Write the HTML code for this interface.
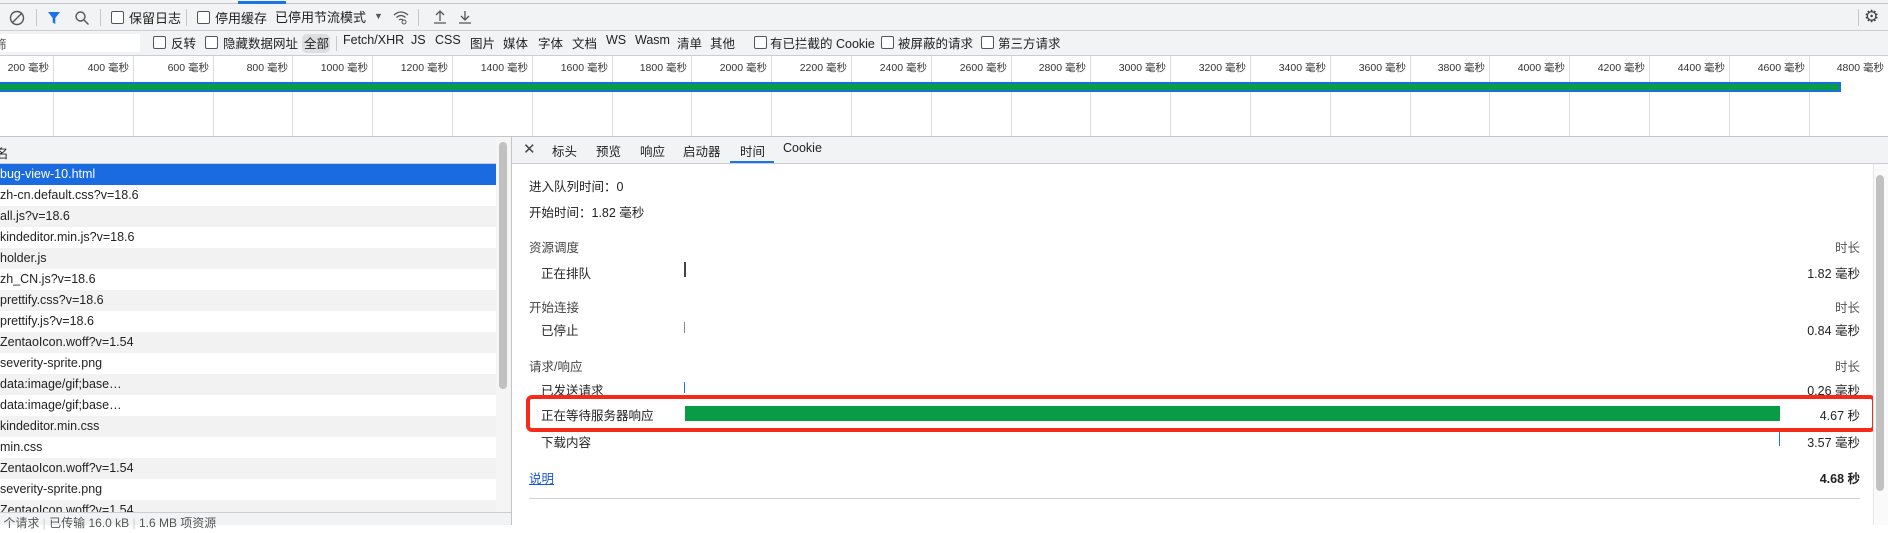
<!DOCTYPE html>
<html><head><meta charset="utf-8"><style>
*{margin:0;padding:0;box-sizing:border-box}
body{width:1888px;height:525px;overflow:hidden;background:#fff;font-family:"Liberation Sans","Noto Sans CJK SC",sans-serif;font-size:12px;color:#222;position:relative}
.a{position:absolute;white-space:nowrap}
.cb{position:absolute;width:13px;height:13px;border:1px solid #555;border-radius:2px;background:#fff}
.dv{position:absolute;width:1px;background:#c8c8c8}
.row{position:absolute;left:0;width:496px;height:21px;line-height:21px;padding-left:0;font-size:12.5px}
.tk{position:absolute;top:56px;height:80px;width:1px;background:#dcdcdc}
.tl{position:absolute;top:60px;font-size:10.5px;color:#333;text-align:right;width:70px}
.d{position:absolute;font-size:12.5px;white-space:nowrap}
.r{position:absolute;right:28px;font-size:12.5px;text-align:right}
.f{position:absolute;top:33px;font-size:12.5px;white-space:nowrap}
</style></head><body>
<div class="a" style="left:0;top:0;width:1888px;height:4px;background:#f1f3f4;border-bottom:1px solid #c4c4c4"></div>
<div class="a" style="left:238px;top:1px;width:48px;height:3px;background:#1a73e8"></div>
<div class="a" style="left:0;top:4px;width:1888px;height:27px;background:#f1f3f4;border-bottom:1px solid #cbcdd1"></div>
<svg class="a" style="left:9px;top:10px" width="16" height="16" viewBox="0 0 16 16"><circle cx="8" cy="8" r="6.5" fill="none" stroke="#555" stroke-width="1.4"/><line x1="3.5" y1="12.5" x2="12.5" y2="3.5" stroke="#555" stroke-width="1.4"/></svg>
<div class="dv" style="left:36px;top:9px;height:17px"></div>
<svg class="a" style="left:47px;top:11px" width="14" height="14" viewBox="0 0 14 14"><path d="M1 1H13L8.3 7V13L5.7 11.5V7Z" fill="#1a73e8"/></svg>
<svg class="a" style="left:74px;top:10px" width="16" height="16" viewBox="0 0 16 16"><circle cx="6.5" cy="6.5" r="4.5" fill="none" stroke="#555" stroke-width="1.4"/><line x1="10" y1="10" x2="14.5" y2="14.5" stroke="#555" stroke-width="1.4"/></svg>
<div class="dv" style="left:100px;top:9px;height:17px"></div>
<div class="cb" style="left:111px;top:11px"></div><div class="a" style="left:129px;top:8px;font-size:13px">保留日志</div>
<div class="dv" style="left:186px;top:9px;height:17px"></div>
<div class="cb" style="left:197px;top:11px"></div><div class="a" style="left:215px;top:8px;font-size:13px">停用缓存</div>
<div class="a" style="left:275px;top:7px;font-size:13px">已停用节流模式</div>
<div class="a" style="left:374px;top:11px;font-size:9px;color:#555">▼</div>
<svg class="a" style="left:392px;top:9px" width="18" height="16" viewBox="0 0 18 16"><path d="M2 6Q9 0 16 6M4.5 8.5Q9 4.5 13.5 8.5M7 11Q9 9.5 11 11" fill="none" stroke="#555" stroke-width="1.3"/><circle cx="12" cy="13" r="2" fill="none" stroke="#555" stroke-width="1"/></svg>
<div class="dv" style="left:418px;top:9px;height:17px"></div>
<svg class="a" style="left:433px;top:9px" width="14" height="16" viewBox="0 0 14 16"><path d="M7 12V2M3 6L7 2L11 6M1 14H13" fill="none" stroke="#555" stroke-width="1.3"/></svg>
<svg class="a" style="left:458px;top:9px" width="14" height="16" viewBox="0 0 14 16"><path d="M7 2V11M3 7L7 11L11 7M1 14H13" fill="none" stroke="#555" stroke-width="1.3"/></svg>
<div class="dv" style="left:1858px;top:9px;height:17px"></div>
<div class="a" style="left:1864px;top:7px;font-size:17px;color:#444">⚙</div>
<div class="a" style="left:0;top:31px;width:1888px;height:25px;background:#f1f3f4;border-bottom:1px solid #cbcdd1"></div>
<div class="a" style="left:0;top:34px;width:140px;height:18px;background:#fff"></div>
<div class="a" style="left:-6px;top:34px;font-size:12.5px;color:#555">筛</div>
<div class="cb" style="left:153px;top:36px"></div><div class="f" style="left:171px">反转</div>
<div class="cb" style="left:205px;top:36px"></div><div class="f" style="left:223px">隐藏数据网址</div>
<div class="a" style="left:302px;top:34px;width:28px;height:19px;background:#dcdee2;border-radius:5px"></div>
<div class="f" style="left:304px">全部</div>
<div class="dv" style="left:336px;top:36px;height:15px"></div>
<div class="f" style="left:343px">Fetch/XHR</div>
<div class="f" style="left:411px">JS</div>
<div class="f" style="left:435px">CSS</div>
<div class="f" style="left:470px">图片</div>
<div class="f" style="left:503px">媒体</div>
<div class="f" style="left:538px">字体</div>
<div class="f" style="left:572px">文档</div>
<div class="f" style="left:606px">WS</div>
<div class="f" style="left:635px">Wasm</div>
<div class="f" style="left:677px">清单</div>
<div class="f" style="left:710px">其他</div>
<div class="cb" style="left:754px;top:36px"></div><div class="f" style="left:770px">有已拦截的 Cookie</div>
<div class="cb" style="left:881px;top:36px"></div><div class="f" style="left:898px">被屏蔽的请求</div>
<div class="cb" style="left:981px;top:36px"></div><div class="f" style="left:998px">第三方请求</div>
<div id="tl"></div>
<div class="a" style="left:0;top:82px;width:1841px;height:10px;background:#1a6fe0"></div>
<div class="a" style="left:0;top:84px;width:1839px;height:6px;background:#079c45"></div>
<div class="a" style="left:0;top:136px;width:1888px;height:1px;background:#c4c4c4"></div>
<div class="a" style="left:0;top:137px;width:511px;height:27px;background:#f1f3f4;border-bottom:1px solid #cbcdd1"></div>
<div class="a" style="left:-4px;top:143px;font-size:12.5px">名</div>
<div class="row" style="top:164px;background:#1a6ae0;color:#fff">bug-view-10.html</div>
<div class="row" style="top:185px">zh-cn.default.css?v=18.6</div>
<div class="row" style="top:206px;background:#f2f2f2">all.js?v=18.6</div>
<div class="row" style="top:227px">kindeditor.min.js?v=18.6</div>
<div class="row" style="top:248px;background:#f2f2f2">holder.js</div>
<div class="row" style="top:269px">zh_CN.js?v=18.6</div>
<div class="row" style="top:290px;background:#f2f2f2">prettify.css?v=18.6</div>
<div class="row" style="top:311px">prettify.js?v=18.6</div>
<div class="row" style="top:332px;background:#f2f2f2">ZentaoIcon.woff?v=1.54</div>
<div class="row" style="top:353px">severity-sprite.png</div>
<div class="row" style="top:374px;background:#f2f2f2">data:image/gif;base…</div>
<div class="row" style="top:395px">data:image/gif;base…</div>
<div class="row" style="top:416px;background:#f2f2f2">kindeditor.min.css</div>
<div class="row" style="top:437px">min.css</div>
<div class="row" style="top:458px;background:#f2f2f2">ZentaoIcon.woff?v=1.54</div>
<div class="row" style="top:479px">severity-sprite.png</div>
<div class="row" style="top:500px;background:#f2f2f2">ZentaoIcon.woff?v=1.54</div>
<div class="a" style="left:496px;top:137px;width:15px;height:378px;background:#f5f5f5"></div>
<div class="a" style="left:499px;top:142px;width:8px;height:247px;background:#c1c1c1;border-radius:4px"></div>
<div class="a" style="left:0;top:512px;width:511px;height:13px;background:#f1f3f4;border-top:1px solid #cbcdd1;font-size:12px;color:#555;line-height:20px">&nbsp;个请求 <span style="color:#ccc">|</span> 已传输 16.0 kB <span style="color:#ccc">|</span> 1.6 MB 项资源</div>
<div class="a" style="left:511px;top:137px;width:1px;height:388px;background:#c4c4c4"></div>
<div class="a" style="left:512px;top:137px;width:1376px;height:27px;background:#f1f3f4;border-bottom:1px solid #cbcdd1"></div>
<div class="a" style="left:523px;top:140px;font-size:15px;color:#444">✕</div>
<div class="a" style="left:552px;top:141px;font-size:12.5px">标头</div>
<div class="a" style="left:596px;top:141px;font-size:12.5px">预览</div>
<div class="a" style="left:640px;top:141px;font-size:12.5px">响应</div>
<div class="a" style="left:683px;top:141px;font-size:12.5px">启动器</div>
<div class="a" style="left:740px;top:141px;font-size:12.5px">时间</div>
<div class="a" style="left:730px;top:161px;width:44px;height:2px;background:#1a73e8"></div>
<div class="a" style="left:783px;top:141px;font-size:12.5px">Cookie</div>
<div class="d" style="left:529px;top:176px">进入队列时间：0</div>
<div class="d" style="left:529px;top:202px">开始时间：1.82 毫秒</div>
<div class="d" style="left:529px;top:237px;color:#444">资源调度</div><div class="r" style="top:237px;color:#555">时长</div>
<div class="d" style="left:541px;top:263px">正在排队</div><div class="a" style="left:684px;top:262px;width:2px;height:15px;background:#444"></div><div class="r" style="top:263px">1.82 毫秒</div>
<div class="d" style="left:529px;top:297px;color:#444">开始连接</div><div class="r" style="top:297px;color:#555">时长</div>
<div class="d" style="left:541px;top:320px">已停止</div><div class="a" style="left:684px;top:322px;width:1px;height:11px;background:#888"></div><div class="r" style="top:320px">0.84 毫秒</div>
<div class="d" style="left:529px;top:356px;color:#444">请求/响应</div><div class="r" style="top:356px;color:#555">时长</div>
<div class="d" style="left:541px;top:380px">已发送请求</div><div class="a" style="left:684px;top:382px;width:1px;height:11px;background:#1a73e8"></div><div class="r" style="top:380px">0.26 毫秒</div>
<div class="d" style="left:541px;top:432px">下载内容</div><div class="a" style="left:1779px;top:431px;width:1px;height:15px;background:#1a73e8"></div><div class="r" style="top:432px">3.57 毫秒</div>
<div class="a" style="left:526px;top:395px;width:1350px;height:37px;border:4px solid #f52a1a;border-radius:6px;background:#fff"></div>
<div class="d" style="left:541px;top:405px">正在等待服务器响应</div>
<div class="a" style="left:685px;top:406px;width:1095px;height:15px;background:#079c45"></div>
<div class="r" style="top:405px">4.67 秒</div>
<div class="d" style="left:529px;top:468px;color:#1a55d0;text-decoration:underline">说明</div>
<div class="r" style="top:468px;font-weight:bold">4.68 秒</div>
<div class="a" style="left:529px;top:498px;width:1331px;height:1px;background:#d0d0d0"></div>
<div class="a" style="left:1873px;top:164px;width:15px;height:361px;background:#fafafa;border-left:1px solid #e5e5e5"></div>
<div class="a" style="left:1876px;top:175px;width:8px;height:316px;background:#c1c1c1;border-radius:4px"></div>
<script>
var h='';var v=200;for(var k=0;k<24;k++){var x=53+k*79.8;h+='<div class="tk" style="left:'+Math.round(x)+'px"></div><div class="tl" style="left:'+Math.round(x-74)+'px">'+v+' 毫秒</div>';v+=200;}
document.getElementById('tl').innerHTML=h;
</script>
</body></html>
